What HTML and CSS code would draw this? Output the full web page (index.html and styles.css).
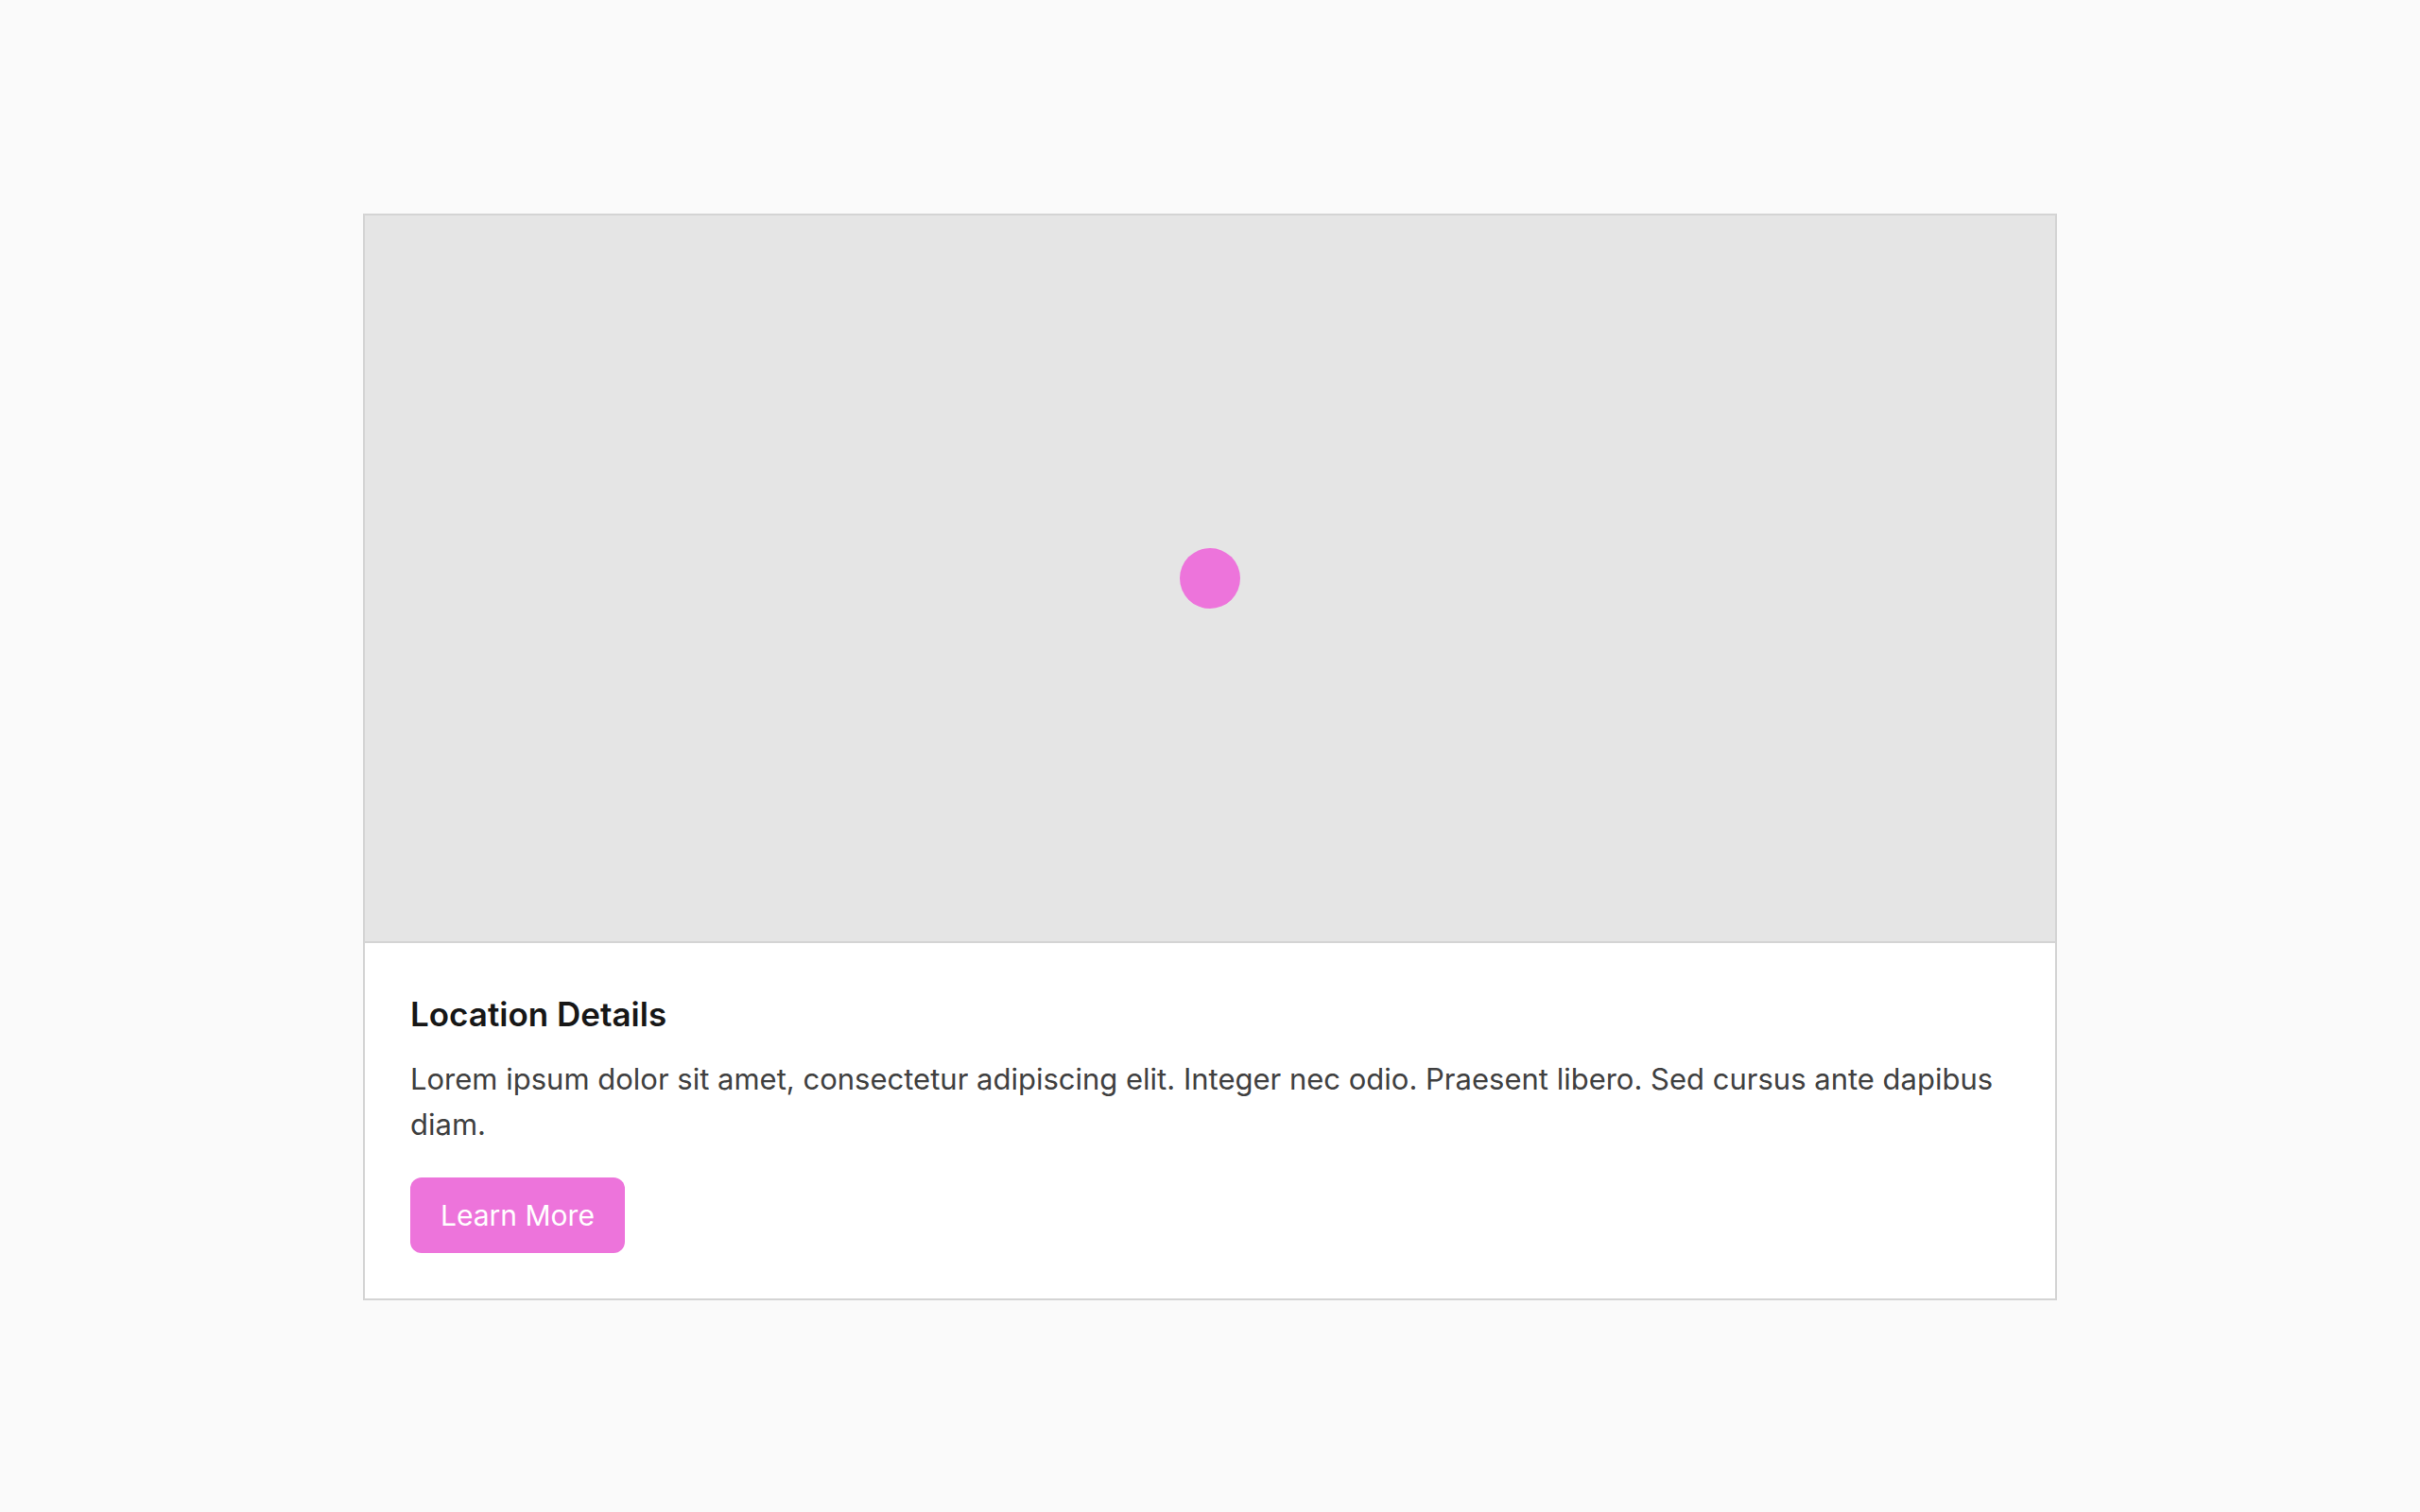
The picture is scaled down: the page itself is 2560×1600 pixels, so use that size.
FILE: index.html
```html
<!DOCTYPE html>
<html lang="en">

<head>
    <meta charset="UTF-8">
    <meta name="viewport" content="width=device-width, initial-scale=1.0">
    <title>Location Details</title>
    <link rel="stylesheet" href="styles.css">
</head>

<body>
    <main class="card">
        <!-- Map area with marker -->
        <div class="map">
            <div class="marker"></div>
        </div>

        <!-- Details -->
        <section class="details">
            <h2>Location Details</h2>
            <p>Lorem ipsum dolor sit amet, consectetur adipiscing elit. Integer nec odio. Praesent libero. Sed cursus ante dapibus diam.</p>
            <button type="button" class="btn">Learn More</button>
        </section>
    </main>
</body>

</html>
```

FILE: styles.css
```css
* {
    box-sizing: border-box;
}

body {
    display: flex;
    align-items: center;
    justify-content: center;
    min-height: 100vh;
    margin: 0;
    padding-top: 2px;
    background-color: #fafafa;
    color: #404040;
    font-family: Inter, "Liberation Sans", sans-serif;
    font-size: 31px;
    line-height: 48px;
}

.card {
    width: 70%;
    background-color: #fff;
    border: 2px solid #d4d4d4;
}

.map {
    display: flex;
    align-items: center;
    justify-content: center;
    height: 770px;
    background-color: #e5e5e5;
    border-bottom: 2px solid #d4d4d4;
}

.marker {
    width: 64px;
    height: 64px;
    border-radius: 50%;
    background-color: #ed74db;
}

.details {
    padding: 48px;
}

h2 {
    margin: 0 0 18px;
    color: #171717;
    font-size: 35px;
    font-weight: 600;
    line-height: 54px;
}

p {
    margin: 0 0 32px;
}

.btn {
    display: block;
    padding: 16px 32px;
    border: none;
    border-radius: 12px;
    background-color: #ed74db;
    color: #fff;
    font: inherit;
    font-size: 30px;
    cursor: pointer;
}
```
